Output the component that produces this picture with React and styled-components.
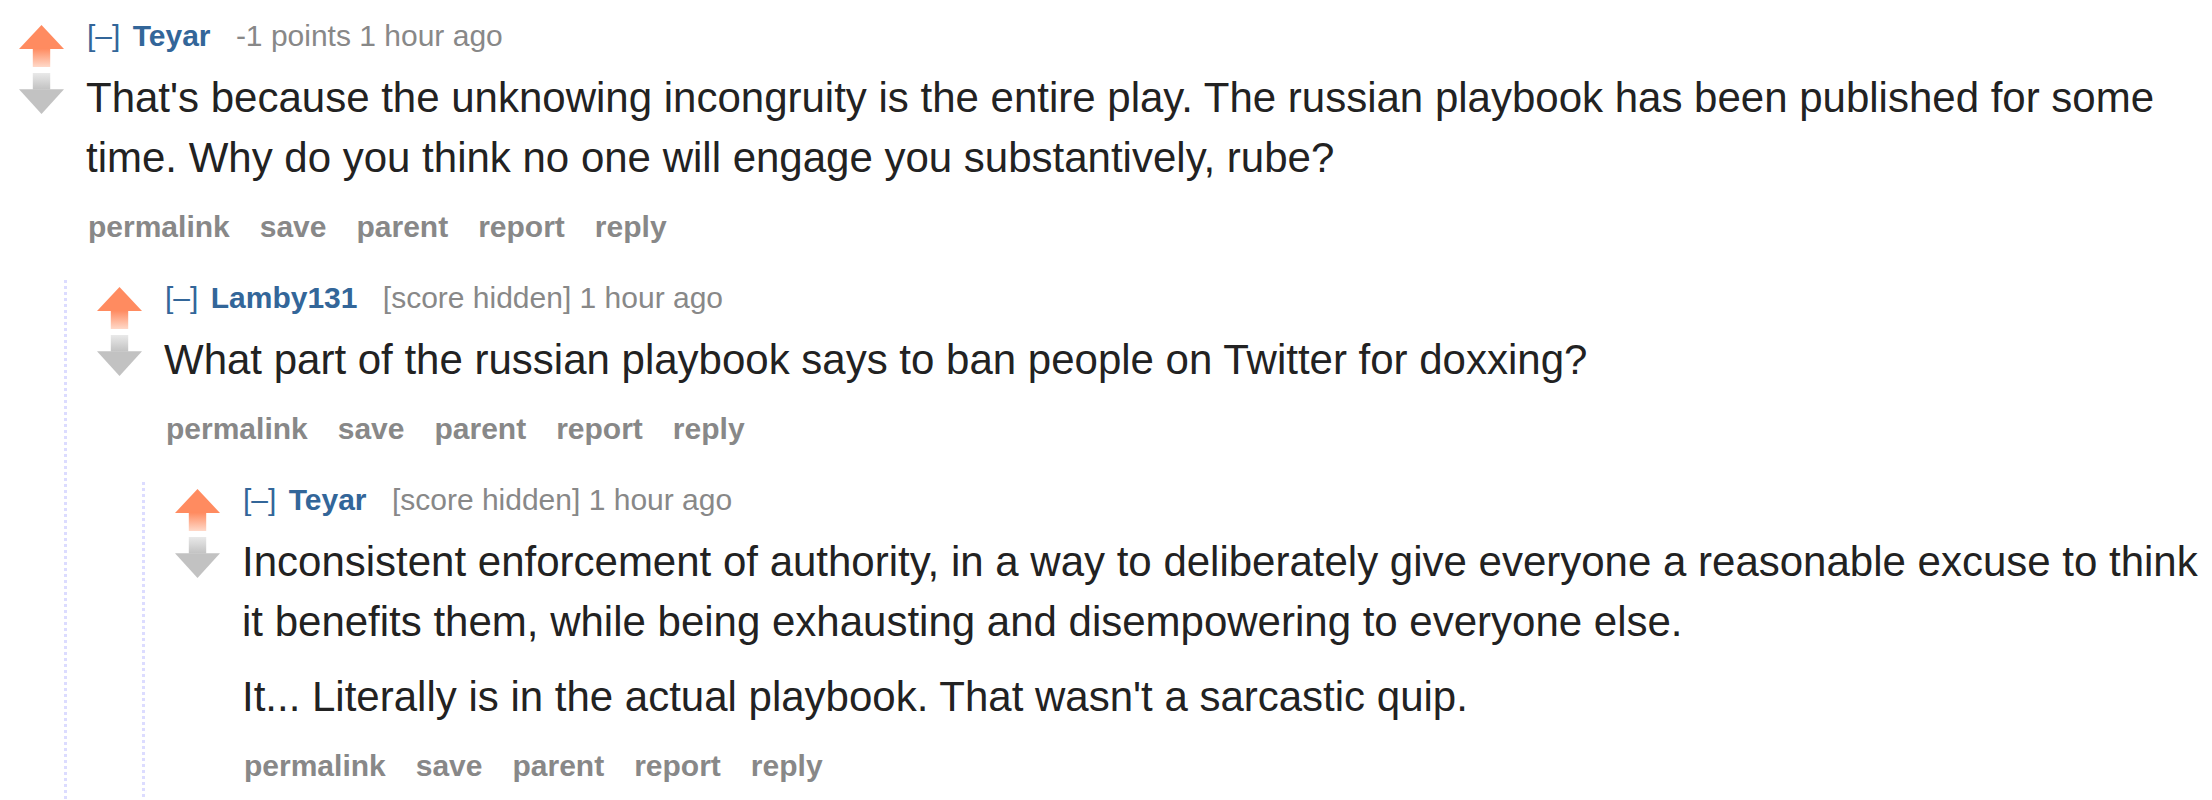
import React from 'react';
import styled, { createGlobalStyle } from 'styled-components';

const GlobalStyle = createGlobalStyle`
  html, body {
    margin: 0;
    padding: 0;
    background: #fff;
    overflow: hidden;
  }
  body {
    font-family: "Liberation Sans", Arial, sans-serif;
  }
`;

const thread = {
  author: 'Teyar',
  score: '-1 points',
  time: '1 hour ago',
  body: [
    "That's because the unknowing incongruity is the entire play. The russian playbook has been published for some time. Why do you think no one will engage you substantively, rube?",
  ],
  replies: [
    {
      author: 'Lamby131',
      score: '[score hidden]',
      time: '1 hour ago',
      body: ['What part of the russian playbook says to ban people on Twitter for doxxing?'],
      replies: [
        {
          author: 'Teyar',
          score: '[score hidden]',
          time: '1 hour ago',
          body: [
            'Inconsistent enforcement of authority, in a way to deliberately give everyone a reasonable excuse to think it benefits them, while being exhausting and disempowering to everyone else.',
            "It... Literally is in the actual playbook. That wasn't a sarcastic quip.",
          ],
          replies: [],
        },
      ],
    },
  ],
};

function UpArrow() {
  return (
    <svg width="45" height="42" viewBox="0 0 15 14">
      <defs>
        <linearGradient id="upShaft" x1="0" y1="0" x2="0" y2="1">
          <stop offset="0" stopColor="#ff8b60" />
          <stop offset="1" stopColor="#ffd9c9" />
        </linearGradient>
      </defs>
      <polygon points="7.5,0 15,8 0,8" fill="#ff8b60" />
      <rect x="4.6" y="7.9" width="5.8" height="6.1" fill="url(#upShaft)" />
    </svg>
  );
}

function DownArrow() {
  return (
    <svg width="45" height="42" viewBox="0 0 15 14">
      <defs>
        <linearGradient id="downShaft" x1="0" y1="0" x2="0" y2="1">
          <stop offset="0" stopColor="#e9e9e9" />
          <stop offset="1" stopColor="#c2c2c2" />
        </linearGradient>
      </defs>
      <rect x="4.6" y="0" width="5.8" height="5.5" fill="url(#downShaft)" />
      <polygon points="0,5.4 15,5.4 7.5,13.7" fill="#c2c2c2" />
    </svg>
  );
}

function Comment({ data, nested }) {
  return (
    <CommentBox $nested={nested}>
      <Midcol>
        <UpArrow />
        <DownArrow />
      </Midcol>
      <Entry>
        <Tagline>
          <Expand>[–]</Expand> <Author>{data.author}</Author>{' '}
          <Score>{data.score}</Score> {data.time}
        </Tagline>
        <Body>
          {data.body.map((p, i) => (
            <p key={i}>{p}</p>
          ))}
        </Body>
        <Buttons>
          <li>permalink</li>
          <li>save</li>
          <li>parent</li>
          <li>report</li>
          <li>reply</li>
        </Buttons>
      </Entry>
      {data.replies.length > 0 && (
        <Child>
          {data.replies.map((r, i) => (
            <Comment key={i} data={r} nested />
          ))}
        </Child>
      )}
    </CommentBox>
  );
}

export default function App() {
  return (
    <>
      <GlobalStyle />
      <Page>
        <Comment data={thread} />
      </Page>
    </>
  );
}

const Page = styled.div`
  padding-top: 18px;
  height: 800px;
  box-sizing: border-box;
  overflow: hidden;
`;

const CommentBox = styled.div`
  display: grid;
  grid-template-columns: 45px 1fr;
  margin-left: ${(p) => (p.$nested ? '30px' : '19px')};
`;

const Midcol = styled.div`
  display: flex;
  flex-direction: column;
  gap: 6px;
  margin-top: 7px;
  svg {
    display: block;
  }
`;

const Entry = styled.div`
  padding-left: 22px;
  min-width: 0;
`;

const Tagline = styled.div`
  font-size: 30px;
  line-height: 36px;
  color: #888;
  white-space: nowrap;
  padding-left: 1px;
`;

const Expand = styled.span`
  color: #369;
  margin-right: 4px;
`;

const Author = styled.span`
  color: #369;
  font-weight: bold;
  margin-right: 17px;
`;

const Score = styled.span`
  color: #888;
`;

const Body = styled.div`
  margin-top: 14px;
  font-size: 42px;
  line-height: 60px;
  color: #222;
  p {
    margin: 0;
  }
  p + p {
    margin-top: 15px;
  }
`;

const Buttons = styled.ul`
  display: flex;
  gap: 30px;
  list-style: none;
  margin: 21px 0 0;
  padding: 0 0 0 2px;
  font-size: 30px;
  line-height: 36px;
  font-weight: bold;
  color: #888;
`;

const Child = styled.div`
  grid-column: 2;
  margin-top: 35px;
  padding-left: 3px;
  padding-bottom: 40px;
  background-image: repeating-linear-gradient(to bottom, #dcdcff 0 3px, transparent 3px 6px);
  background-size: 3px 100%;
  background-repeat: no-repeat;
`;
